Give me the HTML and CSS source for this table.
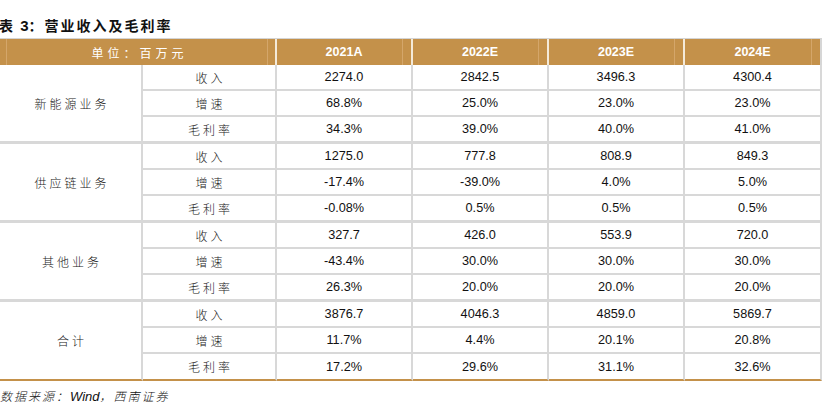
FILE: index.html
```html
<!DOCTYPE html>
<html lang="zh">
<head>
<meta charset="utf-8">
<link rel="stylesheet" href="styles.css">
</head>
<body>
<div class="title">表 <span class="num">3</span>：营业收入及毛利率</div>
<table class="tbl">
  <colgroup>
    <col class="c-seg"><col class="c-item"><col class="c-num"><col class="c-num"><col class="c-num"><col class="c-last">
  </colgroup>
  <thead>
    <tr><th colspan="2" class="unit">单位：百万元</th><th>2021A</th><th>2022E</th><th>2023E</th><th class="last">2024E</th></tr>
  </thead>
  <tbody class="grp">
    <tr class="r1"><td rowspan="3" class="seg">新能源业务</td><td class="item">收入</td><td>2274.0</td><td>2842.5</td><td>3496.3</td><td class="last">4300.4</td></tr>
    <tr class="r2"><td class="item">增速</td><td>68.8%</td><td>25.0%</td><td>23.0%</td><td class="last">23.0%</td></tr>
    <tr class="r3"><td class="item">毛利率</td><td>34.3%</td><td>39.0%</td><td>40.0%</td><td class="last">41.0%</td></tr>
  </tbody>
  <tbody class="grp">
    <tr class="r1"><td rowspan="3" class="seg">供应链业务</td><td class="item">收入</td><td>1275.0</td><td>777.8</td><td>808.9</td><td class="last">849.3</td></tr>
    <tr class="r2"><td class="item">增速</td><td>-17.4%</td><td>-39.0%</td><td>4.0%</td><td class="last">5.0%</td></tr>
    <tr class="r3"><td class="item">毛利率</td><td>-0.08%</td><td>0.5%</td><td>0.5%</td><td class="last">0.5%</td></tr>
  </tbody>
  <tbody class="grp">
    <tr class="r1"><td rowspan="3" class="seg">其他业务</td><td class="item">收入</td><td>327.7</td><td>426.0</td><td>553.9</td><td class="last">720.0</td></tr>
    <tr class="r2"><td class="item">增速</td><td>-43.4%</td><td>30.0%</td><td>30.0%</td><td class="last">30.0%</td></tr>
    <tr class="r3"><td class="item">毛利率</td><td>26.3%</td><td>20.0%</td><td>20.0%</td><td class="last">20.0%</td></tr>
  </tbody>
  <tbody class="grp final">
    <tr class="r1"><td rowspan="3" class="seg">合计</td><td class="item">收入</td><td>3876.7</td><td>4046.3</td><td>4859.0</td><td class="last">5869.7</td></tr>
    <tr class="r2"><td class="item">增速</td><td>11.7%</td><td>4.4%</td><td>20.1%</td><td class="last">20.8%</td></tr>
    <tr class="r3"><td class="item">毛利率</td><td>17.2%</td><td>29.6%</td><td>31.1%</td><td class="last">32.6%</td></tr>
  </tbody>
</table>
<div class="source">数据来源：<span class="en">Wind</span>，西南证券</div>
</body>
</html>
```

FILE: styles.css
```css
html, body {
  margin: 0;
  padding: 0;
  background: #ffffff;
}

body {
  font-family: "Noto Sans CJK SC", "Liberation Sans", sans-serif;
  color: #1a1a1a;
}

.title {
  height: 38px;
  box-sizing: border-box;
  padding-top: 15px;
  margin-left: -1px;
  font-size: 14px;
  line-height: 20px;
  font-weight: 700;
  letter-spacing: 2px;
  color: #111;
  white-space: nowrap;
}

.title .num {
  font-family: "Liberation Sans", sans-serif;
  font-size: 15px;
  letter-spacing: 0;
}

.tbl {
  width: 822px;
  table-layout: fixed;
  border-collapse: separate;
  border-spacing: 0;
  border-top: 1px solid #d4d4d4;
}

.c-seg { width: 143px; }
.c-item { width: 134px; }
.c-num { width: 136px; }
.c-last { width: 137px; }

.tbl th {
  box-sizing: border-box;
  height: 26px;
  padding: 0;
  background:
    linear-gradient(to right, transparent calc(100% - 9px), #d4a66a calc(100% - 9px), #d4a66a calc(100% - 8px), transparent calc(100% - 8px)),
    #c4914a;
  color: #ffffff;
  font-family: "Liberation Sans", sans-serif;
  font-size: 12.5px;
  font-weight: 700;
  text-align: center;
  vertical-align: middle;
  border-right: 2px solid #f4ead9;
}

.tbl th.unit {
  background:
    linear-gradient(to right, transparent 6px, #d4a66a 6px, #d4a66a 7px, transparent 7px),
    linear-gradient(to right, transparent calc(100% - 8px), #d4a66a calc(100% - 8px), #d4a66a calc(100% - 7px), transparent calc(100% - 7px)),
    #c4914a;
  font-family: "Noto Sans CJK SC", sans-serif;
  font-size: 12px;
  font-weight: 400;
  letter-spacing: 4px;
  padding-left: 4px;
}

.tbl th.last {
  border-right: 2px solid #d6d6d6;
}

.tbl td {
  box-sizing: border-box;
  height: 26px;
  padding: 0;
  text-align: center;
  vertical-align: middle;
  font-family: "Liberation Sans", sans-serif;
  font-size: 12.7px;
  color: #111;
  border-right: 2px solid #d8d8d8;
  border-bottom: 2px solid #d8d8d8;
}

.tbl tr.r3 td {
  height: 27px;
  border-bottom-width: 3px;
}

.tbl td.seg {
  font-family: "Noto Sans CJK SC", sans-serif;
  font-size: 12px;
  font-weight: 300;
  letter-spacing: 3px;
  padding-left: 3px;
  color: #222;
  border-bottom-width: 3px;
}

.tbl td.item {
  font-family: "Noto Sans CJK SC", sans-serif;
  font-size: 12px;
  font-weight: 300;
  letter-spacing: 3px;
  padding-left: 3px;
  color: #222;
}

.tbl .final tr.r3 td,
.tbl .final td.seg {
  border-bottom: 2px solid #c4914a;
}

.source {
  margin-top: 7px;
  font-size: 12px;
  line-height: 16px;
  font-style: italic;
  font-weight: 300;
  letter-spacing: 2px;
  color: #111;
  white-space: nowrap;
}

.source .en {
  font-family: "Liberation Sans", sans-serif;
  font-size: 13px;
  font-weight: 400;
  letter-spacing: 0;
}
```
